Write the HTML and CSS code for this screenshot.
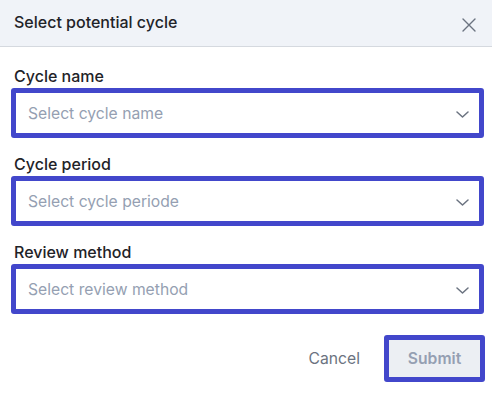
FILE: index.html
```html
<!DOCTYPE html>
<html lang="en">
<head>
  <meta charset="UTF-8" />
  <meta name="viewport" content="width=device-width, initial-scale=1" />
  <title>Select potential cycle</title>
  <link rel="stylesheet" href="styles.css">
</head>
<body>
  <div class="modal">
    <header class="modal-header">
      <h2 class="modal-title">Select potential cycle</h2>
      <button class="close-btn" aria-label="Close">
        <svg width="14" height="14" viewBox="0 0 14 14" fill="none" stroke="currentColor" stroke-width="1.4" stroke-linecap="round">
          <path d="M1 1L13 13M13 1L1 13" />
        </svg>
      </button>
    </header>

    <form class="modal-body">
      <div class="field">
        <label class="field-label">Cycle name</label>
        <div class="select">
          <span class="placeholder">Select cycle name</span>
          <svg class="chevron" width="13" height="7" viewBox="0 0 13 7" fill="none" stroke="currentColor" stroke-width="1.5" stroke-linecap="round" stroke-linejoin="round">
            <path d="M1 1l5.5 5 5.5-5" />
          </svg>
        </div>
      </div>

      <div class="field">
        <label class="field-label">Cycle period</label>
        <div class="select">
          <span class="placeholder">Select cycle periode</span>
          <svg class="chevron" width="13" height="7" viewBox="0 0 13 7" fill="none" stroke="currentColor" stroke-width="1.5" stroke-linecap="round" stroke-linejoin="round">
            <path d="M1 1l5.5 5 5.5-5" />
          </svg>
        </div>
      </div>

      <div class="field">
        <label class="field-label">Review method</label>
        <div class="select">
          <span class="placeholder">Select review method</span>
          <svg class="chevron" width="13" height="7" viewBox="0 0 13 7" fill="none" stroke="currentColor" stroke-width="1.5" stroke-linecap="round" stroke-linejoin="round">
            <path d="M1 1l5.5 5 5.5-5" />
          </svg>
        </div>
      </div>

      <div class="actions">
        <button type="button" class="btn-cancel">Cancel</button>
        <button type="button" class="btn-submit" disabled>Submit</button>
      </div>
    </form>
  </div>
</body>
</html>
```

FILE: styles.css
```css
body {
  margin: 0;
  background: #fff;
  font-family: 'Inter', 'Liberation Sans', sans-serif;
  color: #1f2328;
}

.modal {
  width: 492px;
}

.modal-header {
  display: flex;
  align-items: center;
  justify-content: space-between;
  height: 47px;
  padding: 0 16px 3px 14px;
  box-sizing: border-box;
  background: #f0f3f8;
  border-bottom: 1px solid #d5d9df;
}

.modal-title {
  margin: 0;
  font-size: 16px;
  font-weight: 500;
  line-height: 20px;
  color: #1f2328;
}

.close-btn {
  display: flex;
  padding: 0;
  margin-top: 6px;
  border: none;
  background: none;
  color: #6b7380;
  cursor: pointer;
}

.modal-body {
  padding: 19px 8px 0 11px;
}

.field {
  display: flex;
  flex-direction: column;
  gap: 2px;
  margin-bottom: 16px;
}

.field-label {
  padding-left: 3px;
  font-size: 16px;
  font-weight: 500;
  line-height: 20px;
  color: #1f2328;
}

/* highlighted select box */
.select {
  display: flex;
  align-items: center;
  justify-content: space-between;
  height: 50px;
  padding: 0 10px 0 12px;
  box-sizing: border-box;
  border: 5px solid #4247cb;
  border-radius: 3px;
  background: #fff;
}

.placeholder {
  font-size: 15.7px;
  color: #959fb2;
}

.chevron {
  color: #6b7380;
  margin-top: 2px;
}

.actions {
  display: flex;
  justify-content: flex-end;
  align-items: center;
  gap: 24px;
  margin-top: 21px;
  margin-right: -1px;
}

.btn-cancel {
  padding: 0;
  border: none;
  background: none;
  font-family: inherit;
  font-size: 15.7px;
  color: #6b7380;
  cursor: pointer;
}

.btn-submit {
  width: 101px;
  height: 47px;
  border: 5px solid #4247cb;
  border-radius: 3px;
  background: #eceff3;
  font-family: inherit;
  font-size: 15.7px;
  font-weight: 600;
  color: #959fb2;
}
```
